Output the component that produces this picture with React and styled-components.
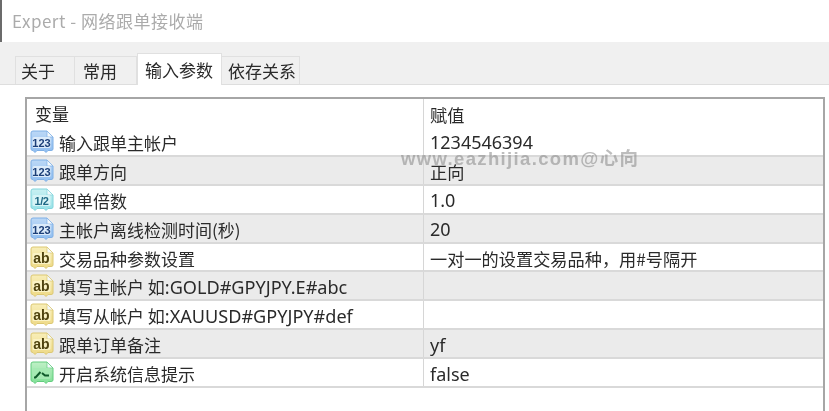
import React from 'react';
import styled, { createGlobalStyle } from 'styled-components';

const GlobalStyle = createGlobalStyle`
  html, body {
    margin: 0;
    padding: 0;
    background: #fff;
  }
`;

const FONT = `'Noto Sans CJK SC', 'Noto Sans', sans-serif`;

const Window = styled.div`
  position: relative;
  width: 829px;
  height: 411px;
  overflow: hidden;
  display: flex;
  flex-direction: column;
  font-family: ${FONT};
  color: #2a2a2a;
  background: #fff;
  box-sizing: border-box;
  filter: blur(0.3px);
`;

const TitleBar = styled.div`
  height: 42px;
  flex: none;
  display: flex;
  align-items: center;
  padding: 0 0 2px 10px;
  font-size: 17px;
  letter-spacing: 0.5px;
  color: #ababab;
  border-left: 2px solid #6b6b6b;
  box-sizing: border-box;
`;

const TabStrip = styled.div`
  height: 43px;
  flex: none;
  box-sizing: border-box;
  background: #f0f0f0;
  border-bottom: 1px solid #dedede;
  display: flex;
  align-items: flex-end;
  padding-left: 15px;
`;

const Tab = styled.div`
  box-sizing: border-box;
  width: ${({ width }) => width}px;
  height: ${({ active }) => (active ? 32 : 28)}px;
  margin-bottom: ${({ active }) => (active ? -1 : 0)}px;
  padding-left: ${({ inset }) => inset}px;
  display: flex;
  align-items: center;
  font-size: 17px;
  background: ${({ active }) => (active ? '#fff' : '#f0f0f0')};
  border: 1px solid #e0e0e0;
  border-bottom: none;
  border-left: ${({ active, first }) => (active || first ? '1px solid #e0e0e0' : 'none')};
  position: relative;
  z-index: ${({ active }) => (active ? 1 : 0)};
`;

const Panel = styled.div`
  flex: 1;
  padding: 12px 4px 0 25px;
  background: #fff;
`;

const List = styled.div`
  border-top: 2px solid #a6a6a6;
  border-left: 2px solid #a6a6a6;
  border-right: 2px solid #a6a6a6;
  height: 320px;
  background: #fff;
`;

const Row = styled.div`
  display: grid;
  grid-template-columns: 396px 1fr;
  height: ${({ header }) => (header ? 29 : 28.9)}px;
  box-sizing: border-box;
  align-items: center;
  background: ${({ shaded }) => (shaded ? '#ebebeb' : '#fff')};
  border-bottom: ${({ header }) => (header ? 'none' : '2px solid #d9d9d9')};
  font-size: 17px;
`;

const NameCell = styled.div`
  display: flex;
  align-items: center;
  gap: 4px;
  padding-left: 2px;
  height: 100%;
  white-space: nowrap;
`;

const NameText = styled.span`
  position: relative;
  top: 1px;
`;

const Latin = styled.span`
  font-family: 'Noto Sans', sans-serif;
  font-size: 18.1px;
`;

const HeadName = styled.div`
  padding-left: 8px;
  height: 100%;
  display: flex;
  align-items: center;
`;

const ValueCell = styled.div`
  height: 100%;
  display: flex;
  align-items: center;
  box-sizing: border-box;
  padding-left: 6px;
  padding-top: 2px;
  border-left: 1px solid #d6d6d6;
  white-space: nowrap;
  font-size: ${({ latin }) => (latin ? 18 : 17.2)}px;
  font-family: ${({ latin }) => (latin ? `'Noto Sans', sans-serif` : FONT)};
`;

const Watermark = styled.div`
  position: absolute;
  left: 401px;
  top: 144px;
  font-family: 'Liberation Sans', 'Noto Sans CJK SC', sans-serif;
  font-size: 18.5px;
  font-weight: 700;
  letter-spacing: 1.35px;
  color: rgba(135, 135, 135, 0.55);
  white-space: nowrap;
  pointer-events: none;
`;

const ICON_COLORS = {
  int: { top: '#bcd8f6', fill: '#8fbdf0', edge: '#7fb0e6', box: '#dcebfa', text: '#1c3f78' },
  dbl: { top: '#c8f0f2', fill: '#96e2e8', edge: '#82d5dc', box: '#d6f4f6', text: '#1f6a86' },
  str: { top: '#f8eeb8', fill: '#eed985', edge: '#dcc873', box: '#faf2c4', text: '#4f430f' },
  bool: { top: '#bff0c6', fill: '#7fe095', edge: '#62cc7e', box: '#a5eab3', text: '#0f5a2a' },
};

const ICON_LABELS = { int: '123', dbl: '1/2', str: 'ab' };
const ICON_SIZES = { int: 11, dbl: 11, str: 14 };

const TypeIcon = ({ type }) => {
  const c = ICON_COLORS[type];
  const grad = `icon-${type}`;
  return (
    <svg width="26" height="25" viewBox="0 0 26 25" style={{ flex: 'none' }}>
      <defs>
        <linearGradient id={grad} x1="0" y1="0" x2="0" y2="1">
          <stop offset="0" stopColor={c.top} />
          <stop offset="1" stopColor={c.fill} />
        </linearGradient>
      </defs>
      <path
        d="M2 4 Q2 2 4 2 H18 L24 8 V20 Q24 21.5 22 21.5 H19 L17 23.5 L15 21.5 H8 L6 23.5 L4 21.5 Q2 21.5 2 20 Z"
        fill={`url(#${grad})`}
        stroke={c.edge}
        strokeWidth="1"
      />
      <path d="M18 2 V8 H24 Z" fill="#f4f9fc" stroke={c.edge} strokeWidth="0.7" />
      <rect x="3.5" y="8" width="18" height="11" rx="1.5" fill={c.box} />
      {type === 'bool' ? (
        <path d="M5 17.5 L6.5 17.5 L11.5 12 M13 13 L16 15.5 H20" stroke={c.text} strokeWidth="2" fill="none" />
      ) : (
        <text
          x="12.5"
          y="17.5"
          textAnchor="middle"
          fontFamily="'Liberation Sans', sans-serif"
          fontWeight="700"
          fontSize={ICON_SIZES[type]}
          letterSpacing={type === 'dbl' ? -0.5 : 0}
          fill={c.text}
        >
          {ICON_LABELS[type]}
        </text>
      )}
    </svg>
  );
};

const params = [
  { type: 'int', name: '输入跟单主帐户', value: '1234546394', latin: true },
  { type: 'int', name: '跟单方向', value: '正向' },
  { type: 'dbl', name: '跟单倍数', value: '1.0', latin: true },
  { type: 'int', name: '主帐户离线检测时间(秒)', value: '20', latin: true },
  { type: 'str', name: '交易品种参数设置', value: '一对一的设置交易品种，用#号隔开' },
  { type: 'str', name: '填写主帐户 如', suffix: ':GOLD#GPYJPY.E#abc', value: '' },
  { type: 'str', name: '填写从帐户 如', suffix: ':XAUUSD#GPYJPY#def', value: '' },
  { type: 'str', name: '跟单订单备注', value: 'yf', latin: true },
  { type: 'bool', name: '开启系统信息提示', value: 'false', latin: true },
];

const App = () => (
  <Window>
    <GlobalStyle />
    <TitleBar>Expert - 网络跟单接收端</TitleBar>
    <TabStrip>
      <Tab first width={60} inset={5}>关于</Tab>
      <Tab width={62} inset={8}>常用</Tab>
      <Tab active width={85} inset={7}>输入参数</Tab>
      <Tab width={78} inset={6}>依存关系</Tab>
    </TabStrip>
    <Panel>
      <List>
        <Row header>
          <HeadName>变量</HeadName>
          <ValueCell>赋值</ValueCell>
        </Row>
        {params.map((p, i) => (
          <Row key={p.name} shaded={i % 2 === 1}>
            <NameCell>
              <TypeIcon type={p.type} />
              <NameText>
                {p.name}
                {p.suffix && <Latin>{p.suffix}</Latin>}
              </NameText>
            </NameCell>
            <ValueCell latin={p.latin}>{p.value}</ValueCell>
          </Row>
        ))}
      </List>
    </Panel>
    <Watermark>www.eazhijia.com@心向</Watermark>
  </Window>
);

export default App;
